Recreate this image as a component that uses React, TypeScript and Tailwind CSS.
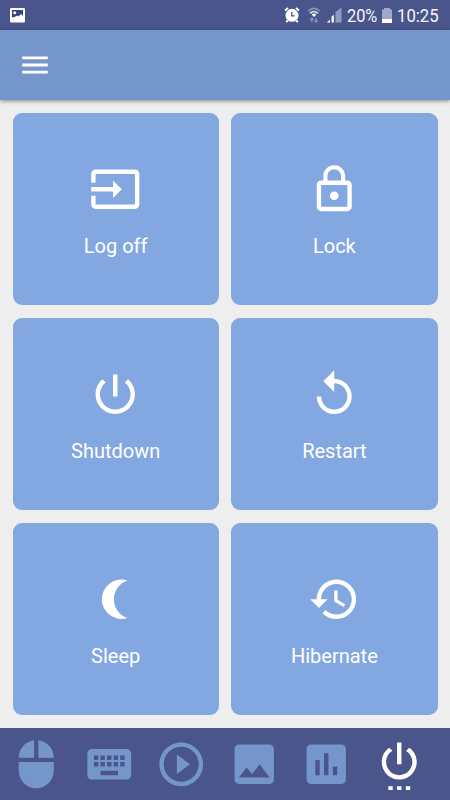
const icons = {
  menu: "M3 18h18v-2H3v2zm0-5h18v-2H3v2zm0-7v2h18V6H3z",
  logOff:
    "M21 3.01H3c-1.1 0-2 .9-2 2V9h2V4.99h18v14.03H3V15H1v4.01c0 1.1.9 1.98 2 1.98h18c1.1 0 2-.88 2-1.98v-14c0-1.11-.9-2-2-2zM11 16l4-4-4-4v3H1v2h10v3z",
  lock: "M12 17c1.1 0 2-.9 2-2s-.9-2-2-2-2 .9-2 2 .9 2 2 2zm6-9h-1V6c0-2.76-2.24-5-5-5S7 3.24 7 6v2H6c-1.1 0-2 .9-2 2v10c0 1.1.9 2 2 2h12c1.1 0 2-.9 2-2V10c0-1.1-.9-2-2-2zM8.9 6c0-1.71 1.39-3.1 3.1-3.1s3.1 1.39 3.1 3.1v2H8.9V6zM18 20H6V10h12v10z",
  shutdown:
    "M13 3h-2v10h2V3zm4.83 2.17l-1.42 1.42C17.99 7.86 19 9.81 19 12c0 3.87-3.13 7-7 7s-7-3.13-7-7c0-2.19 1.01-4.14 2.58-5.42L6.17 5.17C4.23 6.82 3 9.26 3 12c0 4.97 4.03 9 9 9s9-4.03 9-9c0-2.74-1.23-5.18-3.17-6.83z",
  restart:
    "M12 5V1L7 6l5 5V7c3.31 0 6 2.69 6 6s-2.69 6-6 6-6-2.69-6-6H4c0 4.42 3.58 8 8 8s8-3.58 8-8-3.58-8-8-8z",
  sleep: "M17.5 3.4A9 9 0 1 0 17.5 20.6A9.1 9.1 0 0 1 17.5 3.4z",
  hibernate:
    "M13 3c-4.97 0-9 4.03-9 9H1l3.89 3.89.07.14L9 12H6c0-3.87 3.13-7 7-7s7 3.13 7 7-3.13 7-7 7c-1.93 0-3.68-.79-4.94-2.06l-1.42 1.42C8.27 19.99 10.51 21 13 21c4.97 0 9-4.03 9-9s-4.03-9-9-9zm-1 5v5l4.28 2.54.72-1.21-3.5-2.08V8H12z",
  mouse:
    "M13 1.07V9h7c0-4.08-3.05-7.44-7-7.93zM4 15c0 4.42 3.58 8 8 8s8-3.58 8-8v-4H4v4zm7-13.93C7.05 1.56 4 4.92 4 9h7V1.07z",
  keyboard:
    "M20 5H4c-1.1 0-1.99.9-1.99 2L2 17c0 1.1.9 2 2 2h16c1.1 0 2-.9 2-2V7c0-1.1-.9-2-2-2zm-9 3h2v2h-2V8zm0 3h2v2h-2v-2zM8 8h2v2H8V8zm0 3h2v2H8v-2zm-1 2H5v-2h2v2zm0-3H5V8h2v2zm9 7H8v-2h8v2zm0-4h-2v-2h2v2zm0-3h-2V8h2v2zm3 3h-2v-2h2v2zm0-3h-2V8h2v2z",
  play: "M10 16.5l6-4.5-6-4.5v9zM12 2C6.48 2 2 6.48 2 12s4.48 10 10 10 10-4.48 10-10S17.52 2 12 2zm0 18c-4.41 0-8-3.59-8-8s3.59-8 8-8 8 3.59 8 8-3.59 8-8 8z",
  image:
    "M21 19V5c0-1.1-.9-2-2-2H5c-1.1 0-2 .9-2 2v14c0 1.1.9 2 2 2h14c1.1 0 2-.9 2-2zM8.5 13.5l2.5 3.01L14.5 12l4.5 6H5l3.5-4.5z",
  chart:
    "M19 3H5c-1.1 0-2 .9-2 2v14c0 1.1.9 2 2 2h14c1.1 0 2-.9 2-2V5c0-1.1-.9-2-2-2zM9 17H7v-7h2v7zm4 0h-2V7h2v10zm4 0h-2v-4h2v4z",
  power:
    "M7 24h2v-2H7v2zm4 0h2v-2h-2v2zm2-22h-2v10h2V2zm3.56 2.44l-1.45 1.45C16.84 6.94 18 8.83 18 11c0 3.31-2.69 6-6 6s-6-2.69-6-6c0-2.17 1.16-4.06 2.88-5.12L7.44 4.44C5.36 5.88 4 8.28 4 11c0 4.42 3.58 8 8 8s8-3.58 8-8c0-2.72-1.36-5.12-3.44-6.56zM15 24h2v-2h-2v2z",
};

type IconName = keyof typeof icons;

const Icon = ({ name, className }: { name: IconName; className: string }) => (
  <svg viewBox="0 0 24 24" fill="currentColor" className={className}>
    <path d={icons[name]} />
  </svg>
);

const actions: { label: string; icon: IconName }[] = [
  { label: "Log off", icon: "logOff" },
  { label: "Lock", icon: "lock" },
  { label: "Shutdown", icon: "shutdown" },
  { label: "Restart", icon: "restart" },
  { label: "Sleep", icon: "sleep" },
  { label: "Hibernate", icon: "hibernate" },
];

const tabs: IconName[] = ["mouse", "keyboard", "play", "image", "chart", "power"];

const StatusBar = () => (
  <div className="flex h-[30px] items-center bg-[#4a568b] pl-[10px] text-[19px] leading-none text-[#f4f5fa]">
    <svg viewBox="0 0 15 15" className="mt-px h-[15px] w-[15px]">
      <rect width="15" height="14.5" rx="1.2" fill="#fff" />
      <path d="M2 2h11v6l-2-2-2.5 2.5L7.2 7.6 4.5 9 2 9.5z" fill="#35437f" />
      <circle cx="4.7" cy="4.7" r="1.5" fill="#fff" />
    </svg>

    <div className="ml-auto flex h-full items-center">
      <svg viewBox="0 0 16 16" className="mr-[7px] h-4 w-4" fill="none">
        <circle cx="8" cy="8.3" r="6.5" fill="#fff" />
        <path d="M1 3.6l3-2.5M15 3.6l-3-2.5M3.7 13.4l-1.5 1.7M12.3 13.4l1.5 1.7" stroke="#fff" strokeWidth="2" />
        <path d="M7.8 4.8v4h3" stroke="#4a568b" strokeWidth="1.3" />
      </svg>

      <svg viewBox="0 0 14 16" className="mr-[5px] h-4 w-[14px]" fill="none">
        <path d="M1 4.3Q7-1.6 13 4.3" stroke="#8993bd" strokeWidth="1.5" />
        <path d="M3 6.4Q7 2.5 11 6.4" stroke="#dfe3f1" strokeWidth="1.5" />
        <path d="M4.6 7.4Q7 5.6 9.4 7.4L7 10z" fill="#fff" />
        <path d="M4.9 15.5v-4M3.3 13l1.6-1.8L6.5 13M9.1 11v4M7.5 13.4l1.6 1.8 1.6-1.8" stroke="#8993bd" strokeWidth="1.2" />
      </svg>

      <svg viewBox="0 0 16 16" className="mr-[5px] h-4 w-4">
        <path d="M9.5 5L15.5.5v15h-6z" fill="#9099bf" />
        <path d="M.8 15.5L4 12.8v2.7zM5.6 9.5L7.8 7.7v7.8H5.6z" fill="#fff" />
      </svg>

      <span className="w-[35px] origin-left scale-x-[0.86] whitespace-nowrap">20%</span>

      <svg viewBox="0 0 10 15" className="mr-[5px] h-[15px] w-[10px]">
        <path d="M2 0h6v1.5h2v10H0v-10h2z" fill="#a0a7c8" />
        <path d="M0 11h10v4H0z" fill="#fff" />
      </svg>

      <span className="w-[53px] origin-left scale-x-[0.88] whitespace-nowrap">10:25</span>
    </div>
  </div>
);

const App = () => {
  return (
    <div className="flex h-[800px] w-[450px] flex-col overflow-hidden bg-[#eeeeee] font-[Roboto,sans-serif]">
      <StatusBar />

      <header className="z-10 flex h-[70px] shrink-0 items-center bg-[#7596ca] pl-[18px] text-white shadow-[0_1px_4px_rgba(0,0,0,0.45)]">
        <button aria-label="Menu">
          <Icon name="menu" className="h-[34px] w-[34px]" />
        </button>
      </header>

      <main className="grid flex-1 grid-cols-2 gap-[12.5px] p-[12.5px]">
        {actions.map(({ label, icon }) => (
          <button
            key={label}
            className="flex flex-col items-center rounded-[9px] bg-[#83a7e1] pt-[50px] text-white"
          >
            <Icon name={icon} className="h-[52.5px] w-[52.5px]" />
            <span className="mt-[18.5px] text-xl leading-6">{label}</span>
          </button>
        ))}
      </main>

      <nav className="flex h-[72.5px] shrink-0 items-center bg-[#4a568b]">
        {tabs.map((name) => (
          <button
            key={name}
            aria-label={name}
            className={`flex w-[72.5px] justify-center ${name === "power" ? "text-white" : "text-[#7596ca]"}`}
          >
            <Icon name={name} className="h-[52.5px] w-[52.5px]" />
          </button>
        ))}
      </nav>
    </div>
  );
};

export default App;
